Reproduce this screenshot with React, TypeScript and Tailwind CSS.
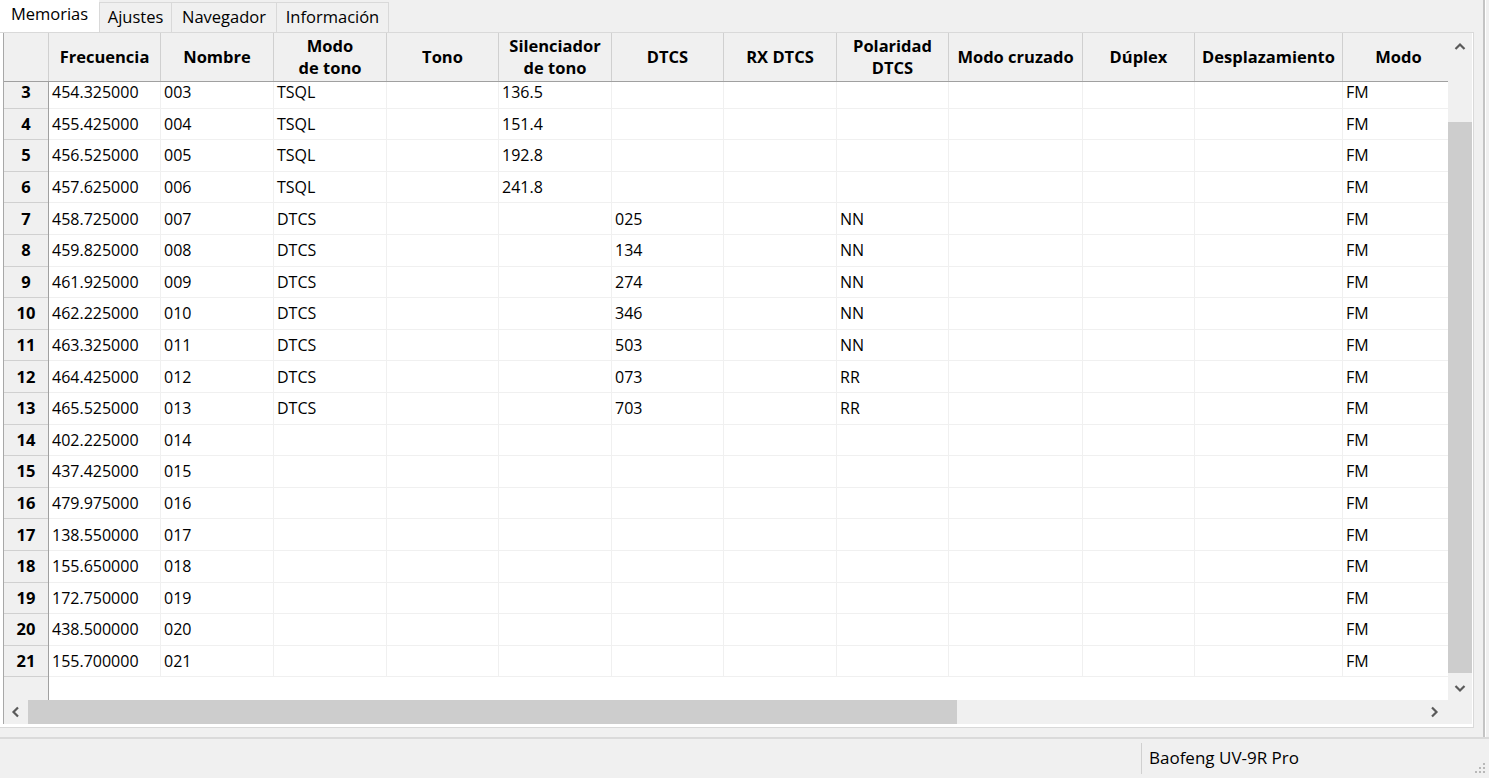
import React from "react";

type Col = { w: number; label: string[] };

const cols: Col[] = [
  { w: 112, label: ["Frecuencia"] },
  { w: 113, label: ["Nombre"] },
  { w: 113, label: ["Modo", "de tono"] },
  { w: 112, label: ["Tono"] },
  { w: 113, label: ["Silenciador", "de tono"] },
  { w: 112, label: ["DTCS"] },
  { w: 113, label: ["RX DTCS"] },
  { w: 112, label: ["Polaridad", "DTCS"] },
  { w: 134, label: ["Modo cruzado"] },
  { w: 112, label: ["Dúplex"] },
  { w: 148, label: ["Desplazamiento"] },
  { w: 112, label: ["Modo"] },
];

type Row = { n: number; f: string; name: string; tm?: string; ct?: string; d?: string; p?: string };

const rows: Row[] = [
  { n: 3, f: "454.325000", name: "003", tm: "TSQL", ct: "136.5" },
  { n: 4, f: "455.425000", name: "004", tm: "TSQL", ct: "151.4" },
  { n: 5, f: "456.525000", name: "005", tm: "TSQL", ct: "192.8" },
  { n: 6, f: "457.625000", name: "006", tm: "TSQL", ct: "241.8" },
  { n: 7, f: "458.725000", name: "007", tm: "DTCS", d: "025", p: "NN" },
  { n: 8, f: "459.825000", name: "008", tm: "DTCS", d: "134", p: "NN" },
  { n: 9, f: "461.925000", name: "009", tm: "DTCS", d: "274", p: "NN" },
  { n: 10, f: "462.225000", name: "010", tm: "DTCS", d: "346", p: "NN" },
  { n: 11, f: "463.325000", name: "011", tm: "DTCS", d: "503", p: "NN" },
  { n: 12, f: "464.425000", name: "012", tm: "DTCS", d: "073", p: "RR" },
  { n: 13, f: "465.525000", name: "013", tm: "DTCS", d: "703", p: "RR" },
  { n: 14, f: "402.225000", name: "014" },
  { n: 15, f: "437.425000", name: "015" },
  { n: 16, f: "479.975000", name: "016" },
  { n: 17, f: "138.550000", name: "017" },
  { n: 18, f: "155.650000", name: "018" },
  { n: 19, f: "172.750000", name: "019" },
  { n: 20, f: "438.500000", name: "020" },
  { n: 21, f: "155.700000", name: "021" },
];

function Chevron({ dir }: { dir: "up" | "down" | "left" | "right" }) {
  const pts =
    dir === "up"
      ? "1.5,8 6,3.5 10.5,8"
      : dir === "down"
      ? "1.5,4 6,8.5 10.5,4"
      : dir === "left"
      ? "8,1.5 3.5,6 8,10.5"
      : "4,1.5 8.5,6 4,10.5";
  return (
    <svg width="12" height="12" viewBox="0 0 12 12">
      <polyline points={pts} fill="none" stroke="#5a5a5a" strokeWidth="2.2" />
    </svg>
  );
}

function cellValues(r: Row): string[] {
  return [r.f, r.name, r.tm ?? "", "", r.ct ?? "", r.d ?? "", "", r.p ?? "", "", "", "", "FM"];
}

export default function App() {
  return (
    <div className="w-[1489px] h-[778px] overflow-hidden bg-[#f0f0f0] font-['Open_Sans','Noto_Sans',sans-serif] text-[16px] text-black flex flex-col">
      <div className="flex h-[737px] shrink-0">
        <div className="w-[1474px] flex flex-col shrink-0">
          {/* Tab bar */}
          <div className="h-[32px] flex items-end shrink-0 text-[16.5px]">
            <div className="w-[99px] h-[32px] bg-white flex items-center justify-center pb-[3px]">Memorias</div>
            <div className="w-[72px] h-[30px] border-l border-t border-[#d9d9d9] flex items-center justify-center pb-[1px]">Ajustes</div>
            <div className="w-[105px] h-[30px] border-l border-t border-[#d9d9d9] flex items-center justify-center pb-[1px]">Navegador</div>
            <div className="w-[113px] h-[30px] border-l border-t border-r border-[#d9d9d9] flex items-center justify-center pb-[1px]">Información</div>
          </div>
          {/* Pane */}
          <div className="h-[696px] bg-white border-t border-b border-r border-[#d9d9d9] pl-[3px] pr-[1px] pb-[3px] flex shrink-0">
            <div className="flex-1 border-l border-[#a8a8a8] flex flex-col bg-white">
              <div className="flex h-[667px]">
                {/* viewport */}
                <div className="w-[1444px] flex flex-col overflow-hidden">
                  {/* header */}
                  <div className="flex h-[49px] shrink-0 bg-[#f0f0f0] border-b border-[#a0a0a0] text-[16.5px]">
                    <div className="w-[45px] shrink-0 border-r border-[#d0d0d0]" />
                    {cols.map((c, i) => (
                      <div
                        key={i}
                        style={{ width: c.w }}
                        className="shrink-0 border-r border-[#d0d0d0] flex flex-col items-center justify-center font-bold leading-[22px] pb-[1px]"
                      >
                        {c.label.map((l, j) => (
                          <span key={j} className="whitespace-nowrap">{l}</span>
                        ))}
                      </div>
                    ))}
                  </div>
                  {/* body */}
                  <div className="flex-1 flex overflow-hidden">
                    <div className="w-[45px] shrink-0 bg-[#f0f0f0] border-r border-[#a0a0a0] overflow-hidden">
                      <div className="mt-[-5px]">
                        {rows.map((r) => (
                          <div
                            key={r.n}
                            className="h-[31.6px] border-b border-[#d0d0d0] flex items-center justify-center font-bold text-[16.5px] leading-[18px]"
                          >
                            {r.n}
                          </div>
                        ))}
                      </div>
                    </div>
                    <div className="flex-1 overflow-hidden bg-white">
                      <div className="mt-[-5px]">
                        {rows.map((r) => (
                          <div key={r.n} className="h-[31.6px] flex leading-[18px]">
                            {cellValues(r).map((v, i) => (
                              <div
                                key={i}
                                style={{ width: cols[i].w }}
                                className="shrink-0 h-full border-r border-b border-[#f0f0f0] flex items-center pl-[3px] whitespace-nowrap"
                              >
                                {v}
                              </div>
                            ))}
                          </div>
                        ))}
                      </div>
                    </div>
                  </div>
                </div>
                {/* vertical scrollbar */}
                <div className="w-[24px] flex flex-col bg-[#f0f0f0]">
                  <div className="h-[24px] flex items-center justify-center shrink-0 pt-[4px]">
                    <Chevron dir="up" />
                  </div>
                  <div className="flex-1 pt-[65px]">
                    <div className="h-[551px] bg-[#cdcdcd]" />
                  </div>
                  <div className="h-[24px] flex items-center justify-center shrink-0">
                    <Chevron dir="down" />
                  </div>
                </div>
              </div>
              {/* horizontal scrollbar */}
              <div className="flex h-[24px] bg-[#f0f0f0]">
                <div className="w-[1444px] flex">
                  <div className="w-[24px] flex items-center justify-center shrink-0">
                    <Chevron dir="left" />
                  </div>
                  <div className="flex-1 flex">
                    <div className="w-[929px] bg-[#cdcdcd]" />
                  </div>
                  <div className="w-[24px] flex items-center justify-center shrink-0 pr-[4px]">
                    <Chevron dir="right" />
                  </div>
                </div>
                <div className="w-[24px] bg-[#f0f0f0]" />
              </div>
            </div>
          </div>
          <div className="flex-1" />
        </div>
        {/* right strip */}
        <div className="flex-1 flex pl-[9px]">
          <div className="w-[2px] h-full bg-[#c4c4c4]" />
          <div className="w-[1px] h-full bg-white" />
        </div>
      </div>
      {/* status bar */}
      <div className="flex-1 border-t-2 border-[#dadada] flex items-stretch">
        <div className="w-[1141px] shrink-0" />
        <div className="w-[1px] my-[4px] bg-[#d0d0d0]" />
        <div className="flex-1 flex items-center pl-[7px] pb-[2px] whitespace-nowrap text-[17px]">Baofeng UV-9R Pro</div>
        <div className="w-[16px] relative">
          <svg className="absolute right-[3px] bottom-[4px]" width="12" height="12" viewBox="0 0 12 12">
            <rect x="9" y="1" width="2" height="2" fill="#b8b8b8" />
            <rect x="5" y="5" width="2" height="2" fill="#b8b8b8" />
            <rect x="9" y="5" width="2" height="2" fill="#b8b8b8" />
            <rect x="1" y="9" width="2" height="2" fill="#b8b8b8" />
            <rect x="5" y="9" width="2" height="2" fill="#b8b8b8" />
            <rect x="9" y="9" width="2" height="2" fill="#b8b8b8" />
          </svg>
        </div>
      </div>
    </div>
  );
}
